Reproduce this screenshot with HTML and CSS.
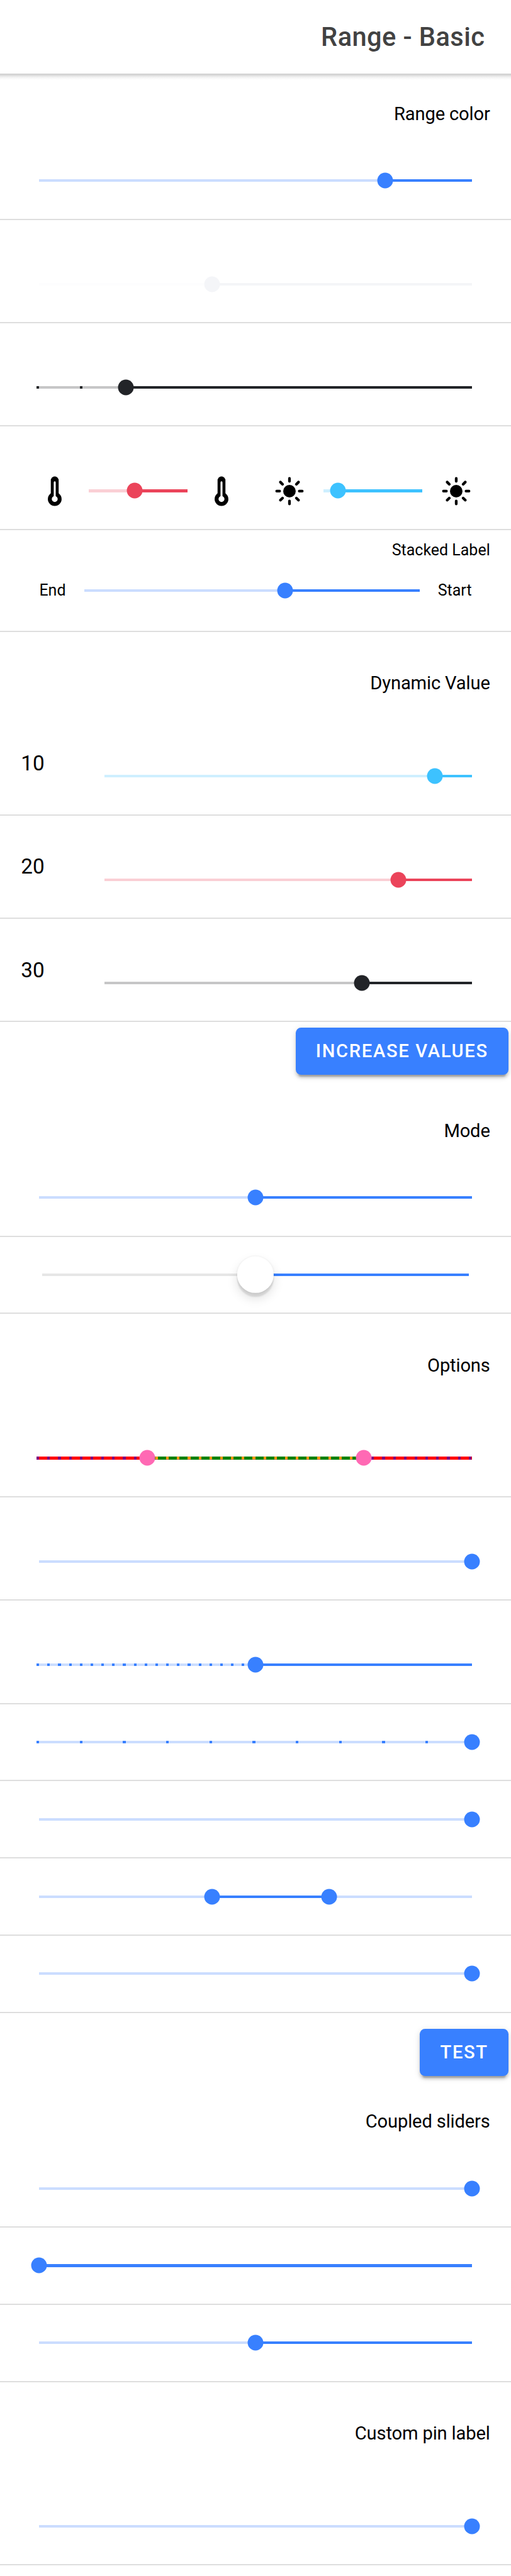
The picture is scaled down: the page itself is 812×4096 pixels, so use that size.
FILE: index.html
```html
<!DOCTYPE html>
<html lang="en">
<head>
<meta charset="utf-8">
<title>Range - Basic</title>
<link rel="stylesheet" href="styles.css">
</head>
<body>
<svg class="defs" aria-hidden="true">
  <symbol id="thermometer" viewBox="0 0 512 512">
    <rect x="192" y="16" width="128" height="360" rx="64"/>
    <circle cx="256" cy="384" r="112"/>
    <circle cx="256" cy="384" r="48" fill="#fff"/>
    <rect x="240" y="96" width="32" height="260" rx="16" fill="#fff"/>
  </symbol>
  <symbol id="sunny" viewBox="0 0 512 512">
    <circle cx="256" cy="256" r="102"/>
    <path fill="none" stroke="#000" stroke-width="44" stroke-linecap="round" d="M256 48v48M256 416v48M48 256h48M416 256h48M369.1 142.9l34-34M108.9 403.1l34-34M369.1 369.1l34 34M108.9 108.9l34 34"/>
  </symbol>
</svg>
<header class="header"><h1 class="title">Range - Basic</h1></header>
<main class="content">
  <section class="list">
    <h2 class="list-header">Range color</h2>
    <div class="item"><div class="range"><div class="track"><i class="active" style="left:80%"></i><i class="knob" style="left:80%"></i></div></div></div>
    <div class="item pin light"><div class="range"><div class="track"><i class="active" style="left:40%"></i><i class="knob" style="left:40%"></i></div></div></div>
    <div class="item pin dark"><div class="range"><div class="track"><i class="ticks wide"></i><i class="active" style="left:20%"></i><i class="knob" style="left:20%"></i></div></div></div>
    <div class="item pin pair">
      <div class="range danger"><svg class="icon"><use href="#thermometer"/></svg><div class="track"><i class="active" style="left:46.3%"></i><i class="knob" style="left:46.3%"></i></div><svg class="icon"><use href="#thermometer"/></svg></div>
      <div class="range secondary"><svg class="icon"><use href="#sunny"/></svg><div class="track"><i class="active" style="left:14.3%"></i><i class="knob" style="left:14.3%"></i></div><svg class="icon"><use href="#sunny"/></svg></div>
    </div>
    <div class="item stacked">
      <span class="label">Stacked Label</span>
      <div class="range"><span>End</span><div class="track"><i class="active" style="left:60%"></i><i class="knob" style="left:60%"></i></div><span>Start</span></div>
    </div>
  </section>
  <section class="list">
    <h2 class="list-header">Dynamic Value</h2>
    <div class="item pin secondary"><span class="value">10</span><div class="range"><div class="track"><i class="active" style="left:90%"></i><i class="knob" style="left:90%"></i></div></div></div>
    <div class="item pin danger"><span class="value">20</span><div class="range"><div class="track"><i class="active" style="left:80%"></i><i class="knob" style="left:80%"></i></div></div></div>
    <div class="item pin dark"><span class="value">30</span><div class="range"><div class="track"><i class="active" style="left:70%"></i><i class="knob" style="left:70%"></i></div></div></div>
    <button class="button">Increase Values</button>
  </section>
  <section class="list">
    <h2 class="list-header">Mode</h2>
    <div class="item"><div class="range"><div class="track"><i class="active" style="left:50%"></i><i class="knob" style="left:50%"></i></div></div></div>
    <div class="item ios"><div class="range"><div class="track"><i class="active" style="left:50%"></i><i class="knob" style="left:50%"></i></div></div></div>
  </section>
  <section class="list">
    <h2 class="list-header">Options</h2>
    <div class="item pin custom"><div class="range"><div class="track"><i class="active" style="left:25%;right:25%"></i><i class="ticks"></i><i class="ticks inner"></i><i class="knob" style="left:25%"></i><i class="knob" style="left:75%"></i></div></div></div>
    <div class="item pin"><div class="range"><div class="track"><i class="knob" style="left:100%"></i></div></div></div>
    <div class="item pin"><div class="range"><div class="track"><i class="ticks"></i><i class="active" style="left:50%"></i><i class="knob" style="left:50%"></i></div></div></div>
    <div class="item"><div class="range"><div class="track"><i class="ticks wide"></i><i class="knob" style="left:100%"></i></div></div></div>
    <div class="item"><div class="range"><div class="track"><i class="knob" style="left:100%"></i></div></div></div>
    <div class="item"><div class="range"><div class="track"><i class="active" style="left:40%;right:33%"></i><i class="knob" style="left:40%"></i><i class="knob" style="left:67%"></i></div></div></div>
    <div class="item"><div class="range"><div class="track"><i class="knob" style="left:100%"></i></div></div></div>
  </section>
  <button class="button">Test</button>
  <section class="list">
    <h2 class="list-header">Coupled sliders</h2>
    <div class="item"><div class="range"><div class="track"><i class="knob" style="left:100%"></i></div></div></div>
    <div class="item"><div class="range"><div class="track"><i class="active" style="left:0"></i><i class="knob" style="left:0"></i></div></div></div>
    <div class="item"><div class="range"><div class="track"><i class="active" style="left:50%"></i><i class="knob" style="left:50%"></i></div></div></div>
  </section>
  <section class="list">
    <h2 class="list-header">Custom pin label</h2>
    <div class="item pin"><div class="range"><div class="track"><i class="knob" style="left:100%"></i></div></div></div>
  </section>
</main>
</body>
</html>
```
FILE: styles.css
```css
/* 1rem = ten layout units */
html {
  font-size: 20.813px;
}

* {
  box-sizing: border-box;
}

body {
  margin: 0;
  background: #fff;
  color: #000;
  font-family: Roboto, "Liberation Sans", sans-serif;
  font-size: 1.6rem;
  overflow-x: hidden;
  --color: #3880ff;
  --bar: #cbddff;
}

.defs {
  display: none;
}

.header {
  position: relative;
  display: flex;
  align-items: center;
  justify-content: flex-end;
  height: 5.6rem;
  padding: .04rem 2rem 0;
}

.header::after {
  content: "";
  position: absolute;
  top: 100%;
  left: 0;
  right: 0;
  height: .5rem;
  background: linear-gradient(#cfcfcf, #d6d6d6 20%, #efefef 52%, #fafafa 80%, #fff);
}

.title {
  margin: 0;
  color: #424242;
  font-size: 2rem;
  font-weight: 500;
  letter-spacing: .01em;
}

.content {
  display: flex;
  flex-direction: column;
}

.list {
  display: flex;
  flex-direction: column;
  padding: .8rem 0;
}

.list-header {
  display: flex;
  align-items: center;
  justify-content: flex-end;
  height: 4.5rem;
  margin: 0;
  padding: .1rem 1.6rem 0;
  font-size: 1.4rem;
  font-weight: 400;
  letter-spacing: -.005em;
}

.item {
  display: flex;
  align-items: center;
  height: 5.9rem;
  padding: 0 1.6rem;
  border-bottom: .1rem solid #dedede;
}

.item.pin {
  height: 7.9rem;
}

.pin .range {
  padding-top: 2rem;
}

.range {
  flex: 1;
  display: flex;
  align-items: center;
  gap: 1.4rem;
  margin: 0 1.4rem;
}

.pair {
  gap: 0;
}

.track {
  position: relative;
  flex: 1;
  height: .2rem;
  background: var(--bar);
}

.active {
  position: absolute;
  top: 0;
  bottom: 0;
  right: 0;
  background: var(--color);
}

.knob {
  position: absolute;
  top: 50%;
  width: 1.2rem;
  height: 1.2rem;
  border-radius: 50%;
  background: var(--color);
  transform: translate(-50%, -50%);
}

.ticks {
  position: absolute;
  top: 0;
  bottom: 0;
  left: -.2rem;
  right: 0;
  background: repeating-linear-gradient(to right, var(--tick, var(--color)) 0 .2rem, transparent .2rem .825rem);
}

.ticks.wide {
  background: repeating-linear-gradient(to right, var(--color) 0 .2rem, transparent .2rem 3.3rem);
}

.light {
  --color: #f4f5f8;
  --bar: #fdfdfe;
}

.dark {
  --color: #222428;
  --bar: #c6c6c7;
}

.danger {
  --color: #eb445a;
  --bar: #facfd5;
}

.secondary {
  --color: #3dc2ff;
  --bar: #ceefff;
}

.custom {
  --color: hotpink;
  --bar: red;
  --tick: purple;
}

.custom .active {
  background: green;
}

.custom .ticks.inner {
  --tick: orange;
  clip-path: inset(0 25% 0 25%);
}

.icon {
  width: 2.4rem;
  height: 2.4rem;
}

.item.stacked {
  flex-direction: column;
  align-items: stretch;
  height: 7.8rem;
  padding-top: .8rem;
  font-size: 1.2rem;
}

.label {
  line-height: 1.4rem;
  text-align: right;
}

.stacked .range {
  flex: none;
  height: 4.8rem;
}

.value {
  width: 5rem;
}

.ios {
  --bar: #e6e6e6;
}

.ios .range {
  margin: 0 1.6rem;
}

.ios .knob {
  width: 2.8rem;
  height: 2.8rem;
  background: #fff;
  box-shadow: 0 .3rem .1rem rgba(0, 0, 0, .1), 0 .4rem .8rem rgba(0, 0, 0, .13), 0 0 0 .1rem rgba(0, 0, 0, .02);
}

.button {
  align-self: flex-end;
  height: 3.6rem;
  margin: .4rem .2rem;
  padding: 0 1.54rem;
  border: 0;
  border-radius: .4rem;
  background: #3880ff;
  box-shadow: 0 .3rem .1rem -.2rem rgba(0, 0, 0, .2), 0 .2rem .2rem 0 rgba(0, 0, 0, .14), 0 .1rem .5rem 0 rgba(0, 0, 0, .12);
  color: #fff;
  font-family: inherit;
  font-size: 1.4rem;
  font-weight: 500;
  letter-spacing: .058em;
  text-transform: uppercase;
}
```
